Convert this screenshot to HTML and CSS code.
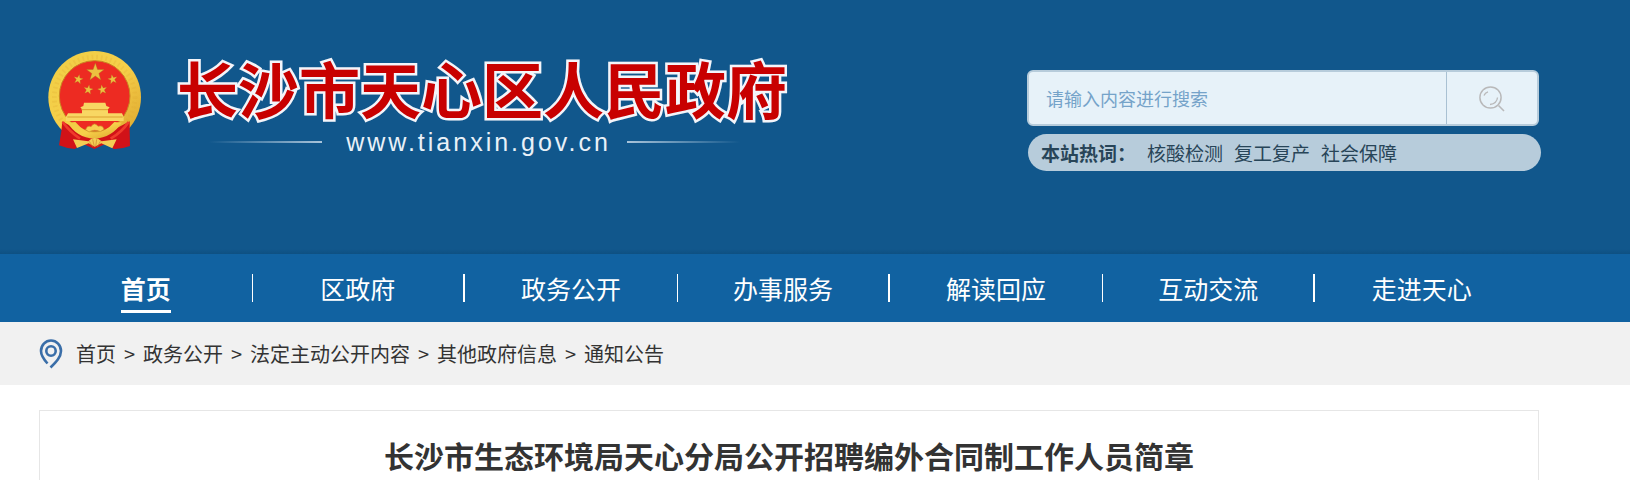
FILE: index.html
```html
<!DOCTYPE html>
<html lang="zh-CN">
<head>
<meta charset="utf-8">
<title>长沙市天心区人民政府</title>
<link rel="stylesheet" href="styles.css">
</head>
<body>
<header class="site-header">
  <div class="wrap header-row">
    <a class="brand" href="#">
      <svg class="emblem" viewBox="54 30 282 300" aria-hidden="true">
        <defs>
          <linearGradient id="gold" x1="0" y1="0" x2="1" y2="1">
            <stop offset="0" stop-color="#f0cf45"/>
            <stop offset=".5" stop-color="#f6cf4a"/>
            <stop offset="1" stop-color="#dba32b"/>
          </linearGradient>
          <path id="star" d="M0-10 2.4-3.1 9.5-3.1 3.8 1.2 5.9 8.1 0 4-5.9 8.1-3.8 1.2-9.5-3.1-2.4-3.1Z"/>
        </defs>
        <circle cx="194" cy="172" r="139" fill="url(#gold)"/>
        <circle cx="194" cy="172" r="121" fill="none" stroke="#e0a92f" stroke-width="14" stroke-dasharray="5 9" opacity=".25"/>
        <circle cx="194" cy="168" r="106" fill="#ed2b22" stroke="#c98522" stroke-width="3"/>
        <g fill="#ecc040" stroke="#a96a1c" stroke-width=".4">
          <use href="#star" transform="translate(196 97) scale(2.8)"/>
          <use href="#star" transform="translate(145 118) rotate(12) scale(1.5)"/>
          <use href="#star" transform="translate(248 118) rotate(-12) scale(1.5)"/>
          <use href="#star" transform="translate(175 149) rotate(10) scale(1.5)"/>
          <use href="#star" transform="translate(217 149) rotate(-10) scale(1.5)"/>
        </g>
        <path d="M162 188h64l3 10 10 4-5 6v12h42l5 10v13H108v-13l6-10h42v-12l-5-6 9-4Z" fill="#f8d763"/>
        <path d="M154 209h80M112 231h166" stroke="#dc9f31" stroke-width="3"/>
        <path d="M97 244q28 14 50 32l46 14 50-14q24-16 56-32v30l1 44q-26 10-49 9l-20-17-38 17-38-17-20 17q-24-1-48-11l7-42Z" fill="#d11218"/>
        <path d="M98 246q22 30 52 50M296 246q-20 30-54 50" stroke="#f03a2c" stroke-width="8" fill="none"/>
        <path d="M136 246q28 32 57 34 32-2 60-34l22 2q-28 44-82 48-54-4-80-48Z" fill="url(#gold)"/>
        <path d="M167 269q5-14 16-9 10-16 21-1 14-5 18 9l-11 7q-18-9-34 1Z" fill="#f7d052" stroke="#cf922a" stroke-width="2"/>
        <path d="M129 298 175 304q18-20 40 0l45-6-13 27-33-15-20 10-18-10-35 14Z" fill="#f3cd55"/>
        <path d="M178 304l10 16M188 298l5 22M200 298l-3 22M211 304l-9 16" stroke="#c9852b" stroke-width="2"/>
      </svg>
      <span class="brand-text">
        <span class="brand-name">长沙市天心区人民政府</span>
        <span class="brand-url">www.tianxin.gov.cn</span>
      </span>
    </a>
    <div class="search-area">
      <form class="search" role="search">
        <input class="search-input" type="text" placeholder="请输入内容进行搜索" aria-label="请输入内容进行搜索">
        <button class="search-button" type="button" aria-label="搜索">
          <svg class="search-icon" viewBox="0 0 26 26" fill="none" stroke="#b9b9ba" aria-hidden="true">
            <circle cx="11.500" cy="11.500" r="10.600" stroke-width="1.500"/>
            <path d="M19.500 19.500 25 25" stroke-width="1.600"/>
            <path d="M5 9.500Q6 6.500 9 5.800M18.500 11.500Q18 17.500 11 18.500" stroke-width="1.300"/>
          </svg>
        </button>
      </form>
      <div class="hot">
        <strong class="hot-label">本站热词：</strong>
        <a href="#">核酸检测</a>
        <a href="#">复工复产</a>
        <a href="#">社会保障</a>
      </div>
    </div>
  </div>
</header>
<nav class="main-nav">
  <div class="wrap">
    <ul class="nav-list">
      <li><a class="current" href="#">首页</a></li>
      <li><a href="#">区政府</a></li>
      <li><a href="#">政务公开</a></li>
      <li><a href="#">办事服务</a></li>
      <li><a href="#">解读回应</a></li>
      <li><a href="#">互动交流</a></li>
      <li><a href="#">走进天心</a></li>
    </ul>
  </div>
</nav>
<div class="crumb-bar">
  <div class="wrap crumbs">
    <svg class="pin" viewBox="0 0 24 30" fill="none" aria-hidden="true">
      <path d="M8.500 24.500C4 19.500 2 16 2 12A10 10.500 0 0 1 22 12C22 18 17 23 11.500 28.500" stroke="#3a6ea8" stroke-width="2.600"/>
      <circle cx="12" cy="12" r="4.700" stroke="#3a6ea8" stroke-width="2.600"/>
    </svg>
    <a href="#">首页</a><span>&gt;</span><a href="#">政务公开</a><span>&gt;</span><a href="#">法定主动公开内容</a><span>&gt;</span><a href="#">其他政府信息</a><span>&gt;</span><a href="#">通知公告</a>
  </div>
</div>
<main class="wrap">
  <article class="article">
    <h1>长沙市生态环境局天心分局公开招聘编外合同制工作人员简章</h1>
  </article>
</main>
</body>
</html>
```
FILE: styles.css
```css
* { box-sizing: border-box; }
body {
  margin: 0;
  background: #fff;
  color: #333;
  font-family: "Noto Sans CJK SC", sans-serif;
  font-size: 20px;
}
a { color: inherit; text-decoration: none; }
.wrap { padding: 0 91px 0 39px; }

.site-header {
  min-height: 254px;
  background: linear-gradient(#11578c 0, #11578c 249px, #0e5082 254px);
}
.header-row {
  display: flex;
  justify-content: space-between;
  align-items: flex-start;
}
.brand { display: flex; padding: 50px 0 0 9px; }
.emblem { width: 94px; height: 100px; }
.brand-text { padding-left: 35px; }
.brand-name {
  display: block;
  font-size: 61px;
  font-weight: 700;
  line-height: 76px;
  white-space: nowrap;
  color: #c80000;
  -webkit-text-stroke: 5px #f4f5fa;
  stroke-linejoin: round;
  paint-order: stroke fill;
}
.brand-url {
  display: flex;
  justify-content: center;
  align-items: center;
  gap: 16px;
  padding: 2px 15px 0 0;
  font-family: "Liberation Sans", sans-serif;
  font-size: 25px;
  line-height: 28px;
  letter-spacing: 3px;
  color: #e9f1f8;
}
.brand-url::before, .brand-url::after {
  content: "";
  width: 113px;
  height: 2px;
  background: linear-gradient(90deg, transparent, #a9c4da);
}
.brand-url::before { margin-right: 8px; }
.brand-url::after { background: linear-gradient(270deg, transparent, #a9c4da); }

.search-area { width: 512px; padding-top: 70px; }
.search {
  display: flex;
  height: 56px;
  border: 2px solid #b7ccdb;
  border-radius: 6px;
  background: #e7f2f9;
  overflow: hidden;
}
.search-input {
  flex: 1;
  min-width: 0;
  padding: 0 17px;
  border: 0;
  outline: 0;
  background: transparent;
  font: 18px "Noto Sans CJK SC", sans-serif;
  color: #33618a;
}
.search-input::placeholder { color: #75a3c9; opacity: 1; }
.search-button {
  display: flex;
  justify-content: center;
  align-items: center;
  width: 91px;
  padding: 2px 0 0;
  border: 0;
  border-left: 1px solid #a9c1d3;
  background: transparent;
}
.search-icon { width: 26px; height: 26px; }
.hot {
  display: flex;
  align-items: center;
  gap: 11px;
  height: 37px;
  margin: 8px -2px 0 1px;
  padding-left: 13px;
  border-radius: 19px;
  background: #b7ccdb;
  color: #284558;
  font-size: 19px;
  white-space: nowrap;
}

.main-nav { background: #1162a1; color: #fff; }
.nav-list {
  display: grid;
  grid-template-columns: repeat(7, 1fr);
  margin: 0;
  padding: 20px 11px 20px 1px;
  list-style: none;
  font-size: 25px;
}
.nav-list li {
  display: flex;
  justify-content: center;
  height: 28px;
  border-right: 1px solid #fff;
}
.nav-list li:nth-child(even) { border-right-width: 2px; }
.nav-list li:last-child { border-right: 0; }
.nav-list a { height: 39px; line-height: 28px; white-space: nowrap; }
.nav-list .current { border-bottom: 3px solid #fff; font-weight: 700; }

.crumb-bar { background: #f1f1f1; }
.crumbs { display: flex; align-items: center; height: 63px; }
.crumbs span { width: 27px; text-align: center; }
.pin { width: 24px; height: 30px; margin-right: 13px; }

.article {
  margin-top: 25px;
  padding: 22px 0 3px;
  border: 1px solid #e6e6e6;
  border-bottom: 0;
}
.article h1 {
  margin: 0;
  font-size: 30px;
  line-height: 44px;
  text-align: center;
}
```
